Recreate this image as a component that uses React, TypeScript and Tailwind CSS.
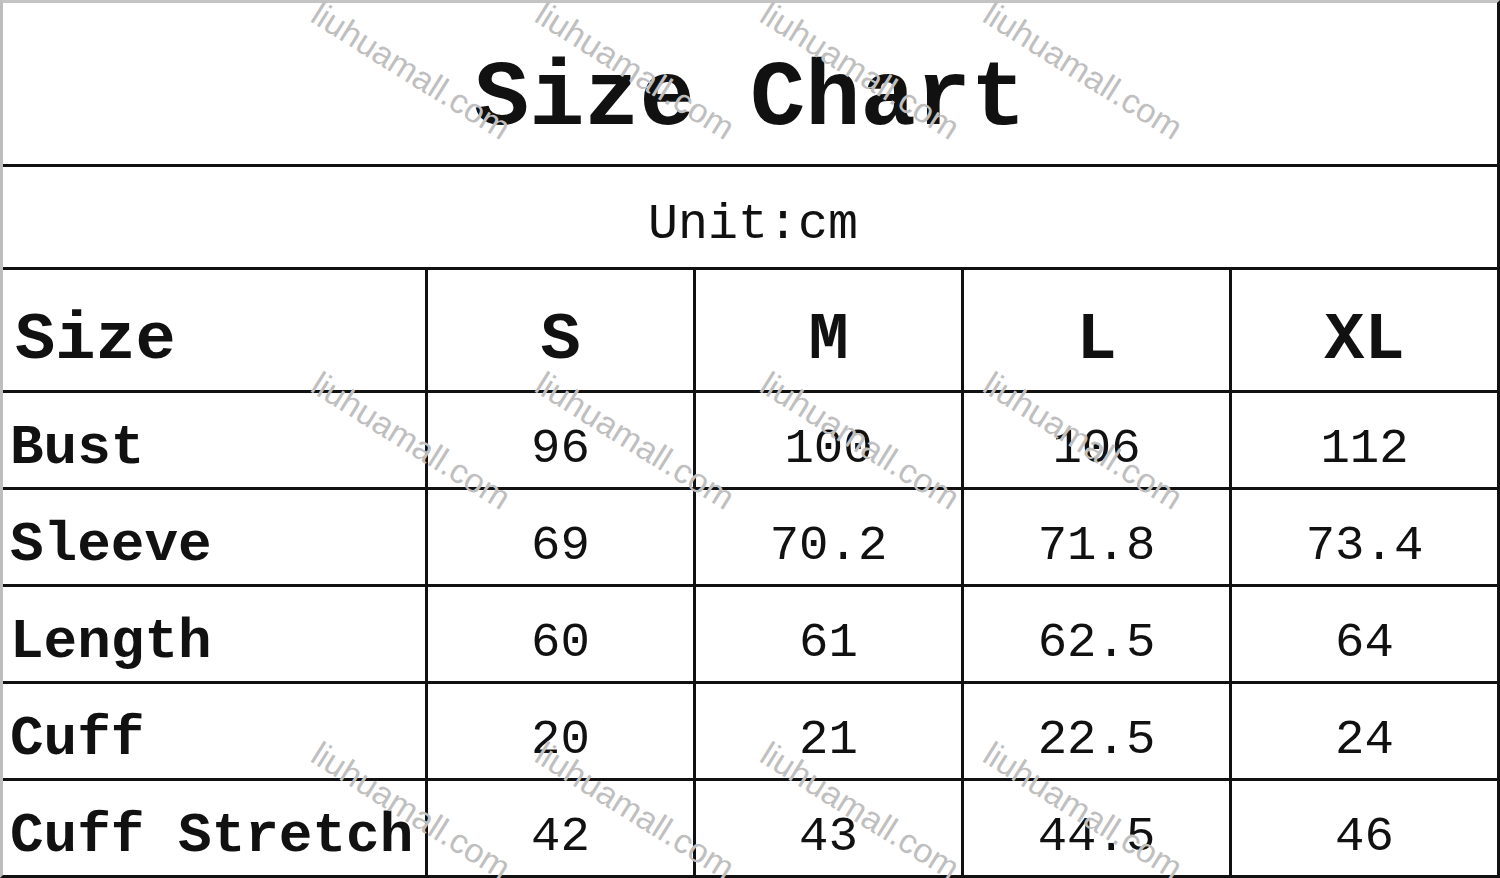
import React from 'react';

const sizes = ['S', 'M', 'L', 'XL'];

const rows: { label: string; values: string[] }[] = [
    { label: 'Bust', values: ['96', '100', '106', '112'] },
    { label: 'Sleeve', values: ['69', '70.2', '71.8', '73.4'] },
    { label: 'Length', values: ['60', '61', '62.5', '64'] },
    { label: 'Cuff', values: ['20', '21', '22.5', '24'] },
    { label: 'Cuff Stretch', values: ['42', '43', '44.5', '46'] },
];

// watermark start points, 4 per band
const marks = [
    { x: 318, y: -4 }, { x: 542, y: -4 }, { x: 767, y: -4 }, { x: 990, y: -4 },
    { x: 318, y: 366 }, { x: 542, y: 366 }, { x: 767, y: 366 }, { x: 990, y: 366 },
    { x: 318, y: 736 }, { x: 542, y: 736 }, { x: 767, y: 736 }, { x: 990, y: 736 },
];

const mono = "font-['Liberation_Mono','DejaVu_Sans_Mono',monospace]";

export default function App() {
    return (
        <div className="relative w-[1500px] h-[878px] bg-white overflow-hidden">
            <div className={`flex flex-col w-full h-full border-l-[3px] border-t-[3px] border-l-[#bdbdbd] border-t-[#c4c4c4] border-r-[3px] border-b-[3px] border-r-[#111] border-b-[#111] text-[#111] ${mono}`}>
                {/* Title */}
                <div className="h-[164px] shrink-0 flex items-center justify-center pt-[32px] border-b-[3px] border-[#111]">
                    <span className="text-[92px] font-semibold leading-none">Size Chart</span>
                </div>

                {/* Unit */}
                <div className="h-[103px] shrink-0 flex items-center justify-center pl-[6px] pt-[16px] border-b-[3px] border-[#111]">
                    <span className="text-[50px] leading-none">Unit:cm</span>
                </div>

                {/* Header */}
                <div className="h-[123px] shrink-0 flex border-b-[3px] border-[#111]">
                    <div className="w-[425px] shrink-0 flex items-center pl-[12px] pt-[20px] border-r-[3px] border-[#111]">
                        <span className="text-[67px] font-bold leading-none">Size</span>
                    </div>
                    {sizes.map((s, i) => (
                        <div
                            key={s}
                            className={`${i < 3 ? 'w-[268px] border-r-[3px] border-[#111]' : 'flex-1'} shrink-0 flex items-center justify-center pt-[20px]`}
                        >
                            <span className="text-[67px] font-bold leading-none">{s}</span>
                        </div>
                    ))}
                </div>

                {/* Data rows */}
                {rows.map((row, r) => (
                    <div
                        key={row.label}
                        className={`${r < rows.length - 1 ? 'h-[97px] border-b-[3px] border-[#111]' : 'flex-1'} shrink-0 flex`}
                    >
                        <div className="w-[425px] shrink-0 flex items-center pl-[7px] pt-[16px] border-r-[3px] border-[#111]">
                            <span className="text-[56px] font-bold leading-none whitespace-pre">{row.label}</span>
                        </div>
                        {row.values.map((v, i) => (
                            <div
                                key={i}
                                className={`${i < 3 ? 'w-[268px] border-r-[3px] border-[#111]' : 'flex-1'} shrink-0 flex items-center justify-center pt-[18px]`}
                            >
                                <span className="text-[49px] leading-none">{v}</span>
                            </div>
                        ))}
                    </div>
                ))}
            </div>

            {/* Watermarks */}
            {marks.map((m, i) => (
                <span
                    key={i}
                    className="absolute origin-top-left rotate-[32deg] text-[34px] leading-none text-[#bfbfbf] font-['Liberation_Sans',Arial,sans-serif] pointer-events-none whitespace-nowrap"
                    style={{ left: m.x + 6, top: m.y }}
                >
                    liuhuamall.com
                </span>
            ))}
        </div>
    );
}
